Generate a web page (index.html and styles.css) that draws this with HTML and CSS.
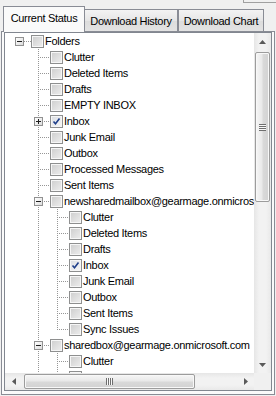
FILE: index.html
```html
<!DOCTYPE html>
<html>
<head>
<meta charset="utf-8">
<link rel="stylesheet" href="styles.css">
</head>
<body>
<div class="topedge"></div>
<div class="tabs">
  <div class="tab active">Current Status</div>
  <div class="tab second">Download History</div>
  <div class="tab third">Download Chart</div>
</div>
<div class="panel">
  <div class="treeview">
    <div class="tree">
      <div class="row"><span class="c root"><span class="exp minus"></span></span><span class="cb"></span><span class="t">Folders</span></div>
      <div class="row"><span class="g"></span><span class="c tee"></span><span class="cb"></span><span class="t">Clutter</span></div>
      <div class="row"><span class="g"></span><span class="c tee"></span><span class="cb"></span><span class="t">Deleted Items</span></div>
      <div class="row"><span class="g"></span><span class="c tee"></span><span class="cb"></span><span class="t">Drafts</span></div>
      <div class="row"><span class="g"></span><span class="c tee"></span><span class="cb"></span><span class="t">EMPTY INBOX</span></div>
      <div class="row"><span class="g"></span><span class="c tee"><span class="exp plus"></span></span><span class="cb on"><svg viewBox="0 0 9 9" width="9" height="9"><path d="M1.5 4.5 L3.5 6.8 L7.5 1.5" fill="none" stroke="#1f3f8a" stroke-width="1.6"/></svg></span><span class="t">Inbox</span></div>
      <div class="row"><span class="g"></span><span class="c tee"></span><span class="cb"></span><span class="t">Junk Email</span></div>
      <div class="row"><span class="g"></span><span class="c tee"></span><span class="cb"></span><span class="t">Outbox</span></div>
      <div class="row"><span class="g"></span><span class="c tee"></span><span class="cb"></span><span class="t">Processed Messages</span></div>
      <div class="row"><span class="g"></span><span class="c tee"></span><span class="cb"></span><span class="t">Sent Items</span></div>
      <div class="row"><span class="g"></span><span class="c tee"><span class="exp minus"></span></span><span class="cb"></span><span class="t">newsharedmailbox@gearmage.onmicrosoft.com</span></div>
      <div class="row"><span class="g"></span><span class="g v"></span><span class="c tee"></span><span class="cb"></span><span class="t">Clutter</span></div>
      <div class="row"><span class="g"></span><span class="g v"></span><span class="c tee"></span><span class="cb"></span><span class="t">Deleted Items</span></div>
      <div class="row"><span class="g"></span><span class="g v"></span><span class="c tee"></span><span class="cb"></span><span class="t">Drafts</span></div>
      <div class="row"><span class="g"></span><span class="g v"></span><span class="c tee"></span><span class="cb on"><svg viewBox="0 0 9 9" width="9" height="9"><path d="M1.5 4.5 L3.5 6.8 L7.5 1.5" fill="none" stroke="#1f3f8a" stroke-width="1.6"/></svg></span><span class="t">Inbox</span></div>
      <div class="row"><span class="g"></span><span class="g v"></span><span class="c tee"></span><span class="cb"></span><span class="t">Junk Email</span></div>
      <div class="row"><span class="g"></span><span class="g v"></span><span class="c tee"></span><span class="cb"></span><span class="t">Outbox</span></div>
      <div class="row"><span class="g"></span><span class="g v"></span><span class="c tee"></span><span class="cb"></span><span class="t">Sent Items</span></div>
      <div class="row"><span class="g"></span><span class="g v"></span><span class="c ell"></span><span class="cb"></span><span class="t">Sync Issues</span></div>
      <div class="row"><span class="g"></span><span class="c tee"><span class="exp minus"></span></span><span class="cb"></span><span class="t">sharedbox@gearmage.onmicrosoft.com</span></div>
      <div class="row"><span class="g"></span><span class="g v"></span><span class="c tee"></span><span class="cb"></span><span class="t">Clutter</span></div>
      <div class="row"><span class="g"></span><span class="g v"></span><span class="c tee"></span><span class="cb"></span><span class="t">Deleted Items</span></div>
    </div>
    <div class="vscroll">
      <div class="sbtn"><svg width="7" height="4" viewBox="0 0 7 4"><polygon points="0,4 3.5,0 7,4" fill="#5a5a5a"/></svg></div>
      <div class="vtrack"><div class="vthumb"><span class="vgrip"></span></div></div>
      <div class="sbtn"><svg width="7" height="4" viewBox="0 0 7 4"><polygon points="0,0 3.5,4 7,0" fill="#5a5a5a"/></svg></div>
    </div>
    <div class="hscroll">
      <div class="sbtn"><svg width="4" height="7" viewBox="0 0 4 7"><polygon points="4,0 0,3.5 4,7" fill="#5a5a5a"/></svg></div>
      <div class="htrack"><div class="hthumb"><span class="hgrip"></span></div></div>
      <div class="sbtn"><svg width="4" height="7" viewBox="0 0 4 7"><polygon points="0,0 4,3.5 0,7" fill="#5a5a5a"/></svg></div>
    </div>
    <div class="corner"></div>
  </div>
</div>
</body>
</html>
```

FILE: styles.css
```css
html, body {
  margin: 0;
  padding: 0;
}
body {
  width: 276px;
  height: 396px;
  overflow: hidden;
  background: #f0f0f0;
  font-family: "Liberation Sans", Arial, sans-serif;
  font-size: 11px;
  letter-spacing: -0.3px;
  color: #000;
}

.topedge {
  height: 2px;
  margin-left: 243px;
  border-left: 1px solid #a0a0a0;
  border-bottom: 1px solid #a0a0a0;
}

.tabs {
  display: flex;
  align-items: flex-end;
  height: 28px;
  padding-left: 3px;
}
.tab {
  box-sizing: border-box;
  height: 22px;
  border: 1px solid #898c95;
  border-bottom: none;
  background: linear-gradient(#f3f3f3, #e6e6e6 50%, #dcdcdc 51%, #e3e3e3);
  display: flex;
  align-items: center;
  justify-content: center;
  white-space: nowrap;
}
.tab.active {
  width: 82px;
  height: 26px;
  margin-bottom: -1px;
  padding-bottom: 3px;
  background: #fafafa;
  position: relative;
  z-index: 1;
}
.tab.second {
  width: 94px;
  margin-left: -1px;
}
.tab.third {
  width: 86px;
}

.panel {
  margin: 0 1px;
  border: 1px solid #898c95;
  background: #fafafa;
  padding: 0 2px 3px 2px;
}

.treeview {
  box-sizing: border-box;
  height: 359px;
  border: 1px solid #828790;
  background: #fff;
  display: grid;
  grid-template-columns: 1fr 17px;
  grid-template-rows: 1fr 17px;
}

.tree {
  overflow: hidden;
  padding-left: 5px;
}
.row {
  display: flex;
  align-items: center;
  height: 16px;
  white-space: nowrap;
}
.g {
  flex: none;
  width: 19px;
  height: 16px;
}
.g.v {
  background: repeating-linear-gradient(#969696 0 1px, transparent 1px 2px) 9px 0 / 1px 16px no-repeat;
}
.c {
  flex: none;
  box-sizing: border-box;
  width: 21px;
  height: 16px;
  padding-left: 5px;
  display: flex;
  align-items: center;
}
.c.root {
  background: repeating-linear-gradient(to right, #969696 0 1px, transparent 1px 2px) 10px 8px / 11px 1px no-repeat;
}
.c.tee {
  background:
    repeating-linear-gradient(to right, #969696 0 1px, transparent 1px 2px) 11px 8px / 10px 1px no-repeat,
    repeating-linear-gradient(#969696 0 1px, transparent 1px 2px) 9px 0 / 1px 16px no-repeat;
}
.c.ell {
  background:
    repeating-linear-gradient(to right, #969696 0 1px, transparent 1px 2px) 11px 8px / 10px 1px no-repeat,
    repeating-linear-gradient(#969696 0 1px, transparent 1px 2px) 9px 0 / 1px 9px no-repeat;
}
.exp {
  box-sizing: border-box;
  width: 9px;
  height: 9px;
  border: 1px solid #919191;
  margin-top: 1px;
}
.exp.minus {
  background:
    linear-gradient(#1e1e1e, #1e1e1e) center / 5px 1px no-repeat,
    linear-gradient(135deg, #ffffff, #dcdcdc);
}
.exp.plus {
  background:
    linear-gradient(#1e1e1e, #1e1e1e) center / 5px 1px no-repeat,
    linear-gradient(#1e1e1e, #1e1e1e) center / 1px 5px no-repeat,
    linear-gradient(135deg, #ffffff, #dcdcdc);
}
.cb {
  flex: none;
  box-sizing: border-box;
  width: 13px;
  height: 13px;
  border: 1px solid #8e8f8f;
  background: linear-gradient(135deg, #cdcdcd, #eeeeee);
  box-shadow: inset 0 0 0 1px #f6f6f6;
  margin-right: 1px;
  display: flex;
  align-items: center;
  justify-content: center;
}
.cb.on {
  background: linear-gradient(135deg, #dadde2, #f7f7f7);
}
.cb svg {
  display: block;
}
.t {
  line-height: 16px;
}

.vscroll {
  display: flex;
  flex-direction: column;
  background: linear-gradient(to right, #e6e6e6, #f2f2f2 30%, #f2f2f2 70%, #e9e9e9);
}
.sbtn {
  flex: none;
  width: 17px;
  height: 17px;
  display: flex;
  align-items: center;
  justify-content: center;
}
.sbtn svg {
  display: block;
}
.vtrack {
  flex: 1;
}
.vthumb {
  box-sizing: border-box;
  margin: 2px 1px 0 1px;
  height: 150px;
  border: 1px solid #9c9c9c;
  border-radius: 2px;
  background: linear-gradient(to right, #f6f6f6, #e9e9e9 45%, #d9d9d9 55%, #d2d2d2);
  box-shadow: inset 0 0 0 1px #f8f8f8;
  display: flex;
  align-items: center;
  justify-content: center;
}
.vgrip {
  width: 7px;
  height: 7px;
  background: repeating-linear-gradient(#6e6e6e 0 1px, #f8f8f8 1px 2px);
}

.hscroll {
  display: flex;
  background: linear-gradient(#e6e6e6, #f2f2f2 30%, #f2f2f2 70%, #e9e9e9);
}
.htrack {
  flex: 1;
  display: flex;
  align-items: center;
}
.hthumb {
  box-sizing: border-box;
  margin-left: 2px;
  width: 171px;
  height: 15px;
  border: 1px solid #9c9c9c;
  border-radius: 2px;
  background: linear-gradient(#f6f6f6, #e9e9e9 45%, #d9d9d9 55%, #d2d2d2);
  box-shadow: inset 0 0 0 1px #f8f8f8;
  display: flex;
  align-items: center;
  justify-content: center;
}
.hgrip {
  width: 7px;
  height: 7px;
  background: repeating-linear-gradient(to right, #6e6e6e 0 1px, #f8f8f8 1px 2px);
}
.corner {
  background: #f0f0f0;
}
```
